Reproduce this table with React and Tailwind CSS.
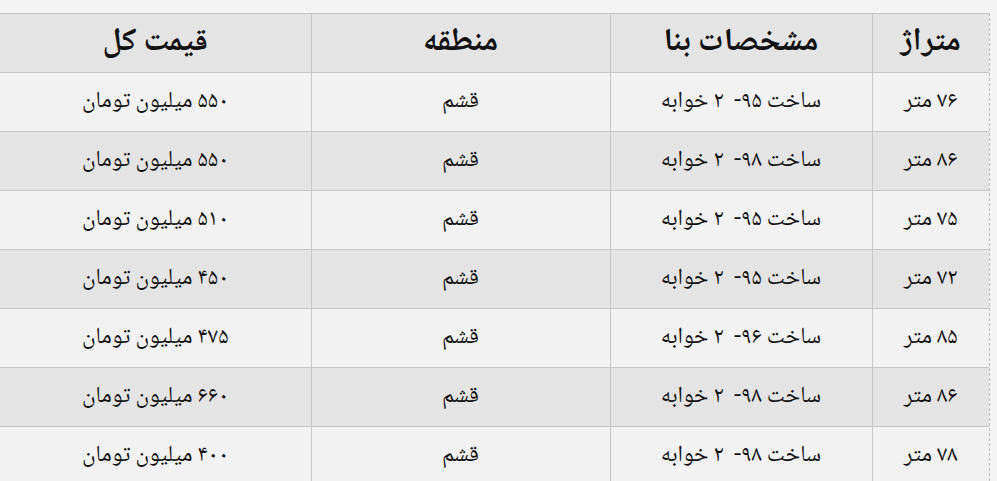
import React from "react";

const rows = [
  ["۷۶ متر", "ساخت ۹۵-  ۲ خوابه", "قشم", "۵۵۰ میلیون تومان"],
  ["۸۶ متر", "ساخت ۹۸-  ۲ خوابه", "قشم", "۵۵۰ میلیون تومان"],
  ["۷۵ متر", "ساخت ۹۵-  ۲ خوابه", "قشم", "۵۱۰ میلیون تومان"],
  ["۷۲ متر", "ساخت ۹۵-  ۲ خوابه", "قشم", "۴۵۰ میلیون تومان"],
  ["۸۵ متر", "ساخت ۹۶-  ۲ خوابه", "قشم", "۴۷۵ میلیون تومان"],
  ["۸۶ متر", "ساخت ۹۸-  ۲ خوابه", "قشم", "۶۶۰ میلیون تومان"],
  ["۷۸ متر", "ساخت ۹۸-  ۲ خوابه", "قشم", "۴۰۰ میلیون تومان"],
];

const headers = ["متراژ", "مشخصات بنا", "منطقه", "قیمت کل"];
const widths = ["w-[117px]", "w-[262px]", "w-[299px]", "w-[311px]"];

function App() {
  return (
    <div className="w-[997px] h-[481px] overflow-hidden bg-[#f4f4f4] pt-[13px] font-['Noto_Naskh_Arabic','Noto_Sans_Arabic','DejaVu_Sans',sans-serif] text-[#111]">
      <div className="w-[990px] border-r border-dashed border-[#bdbdbd]">
        <table dir="rtl" className="w-[989px] border-collapse table-fixed">
          <thead>
            <tr className="h-[59px] bg-[#e4e4e4] border-t border-[#c6c6c6]">
              {headers.map((h, i) => (
                <th
                  key={h}
                  className={`${widths[i]} border-l border-b border-[#c6c6c6] text-center text-[32px] font-bold leading-none last:border-l-0`}
                >
                  {h}
                </th>
              ))}
            </tr>
          </thead>
          <tbody>
            {rows.map((r, idx) => (
              <tr
                key={idx}
                className={`h-[59px] ${idx % 2 === 0 ? "bg-[#f2f2f2]" : "bg-[#e4e4e4]"}`}
              >
                {r.map((c, i) => (
                  <td
                    key={i}
                    className="border-l border-b border-[#c6c6c6] text-center text-[23px] leading-none whitespace-pre last:border-l-0"
                  >
                    {c}
                  </td>
                ))}
              </tr>
            ))}
          </tbody>
        </table>
      </div>
    </div>
  );
}

export default App;
